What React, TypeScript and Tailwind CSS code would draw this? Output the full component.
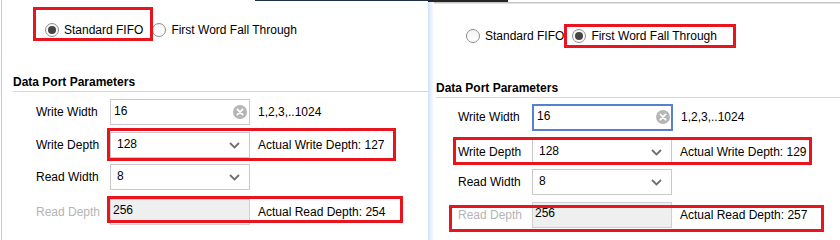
import React from "react";

const FONT = { fontFamily: '"Liberation Sans", Arial, sans-serif' };

function Radio({ checked }: { checked?: boolean }) {
  return (
    <span className="flex h-[14px] w-[14px] shrink-0 items-center justify-center rounded-full border border-[#8e8e8e] bg-gradient-to-b from-[#f4f4f4] to-white">
      {checked && <span className="h-[8px] w-[8px] rounded-full bg-[#454545]" />}
    </span>
  );
}

function RadioItem({ checked, label }: { checked?: boolean; label: string }) {
  return (
    <div className="flex h-[14px] items-center gap-[5px]">
      <Radio checked={checked} />
      <span className="text-[12px] leading-[14px] text-black whitespace-nowrap">{label}</span>
    </div>
  );
}

function ClearIcon() {
  return (
    <svg width="14" height="14" viewBox="0 0 14 14" className="shrink-0">
      <circle cx="7" cy="7" r="7" fill="#b6b6b6" />
      <path d="M4.4 4.4 L9.6 9.6 M9.6 4.4 L4.4 9.6" stroke="#fff" strokeWidth="1.8" strokeLinecap="round" />
    </svg>
  );
}

function Chevron() {
  return (
    <svg width="11" height="7" viewBox="0 0 11 7" className="shrink-0">
      <path d="M1 1 L5.5 5.5 L10 1" stroke="#6f6f6f" strokeWidth="1.8" fill="none" />
    </svg>
  );
}

function TextInput({ value, focused }: { value: string; focused?: boolean }) {
  return (
    <div
      className={
        focused
          ? "flex h-[27px] w-[141px] items-center border-2 border-[#5681cf] bg-white pl-[3px] pr-[1px]"
          : "flex h-[26px] w-[140px] items-center border border-[#c9c9c9] bg-white pl-[3px] pr-[2px]"
      }
    >
      <span className="flex-1 text-[12px] leading-[14px] text-black -mt-[3px]">{value}</span>
      <ClearIcon />
    </div>
  );
}

function Select({ value }: { value: string }) {
  return (
    <div className="flex h-[26px] w-[140px] items-center border border-[#c9c9c9] bg-white pl-[6px] pr-[9px]">
      <span className="flex-1 text-[12px] leading-[14px] text-black -mt-[2px]">{value}</span>
      <Chevron />
    </div>
  );
}

function ReadOnly({ value }: { value: string }) {
  return (
    <div className="flex h-[26px] w-[140px] items-start border border-[#cfcfcf] bg-[#efefef] pl-[2px] pt-[3px]">
      <span className="text-[12px] leading-[14px] text-black">{value}</span>
    </div>
  );
}

function Row({
  label,
  disabled,
  children,
  hint,
}: {
  label: string;
  disabled?: boolean;
  children: React.ReactNode;
  hint?: string;
}) {
  return (
    <div className="flex h-[26px] items-center">
      <span
        className={
          "w-[74px] shrink-0 text-[12px] leading-[14px] whitespace-nowrap " +
          (disabled ? "text-[#b4b4b4]" : "text-black")
        }
      >
        {label}
      </span>
      {children}
      {hint && <span className="ml-[8px] text-[12px] leading-[14px] text-black whitespace-nowrap">{hint}</span>}
    </div>
  );
}

function Heading({ className }: { className: string }) {
  return (
    <div className={className + " border-b border-[#d6d6d6] pb-[2px] text-[12px] leading-[14px]"}>
      <span className="block font-bold text-black">Data Port Parameters</span>
    </div>
  );
}

function LeftPanel() {
  return (
    <div className="flex h-[240px] w-[428px] bg-white">
      <div className="w-px bg-white" />
      <div className="w-px bg-[#b3cff2]" />
      <div className="flex flex-1 flex-col">
        <div className="flex h-px">
          <div className="w-[253px]" />
          <div className="flex-1 bg-[#1d3049]" />
        </div>
        {/* radios */}
        <div className="mt-[22px] flex items-center gap-[9px] pl-[43px]">
          <div className="relative">
            <RadioItem checked label="Standard FIFO" />
            <div className="pointer-events-none absolute left-[-12px] top-[-16px] h-[34px] w-[120px] border-[3px] border-[#e8151f]" />
          </div>
          <RadioItem label="First Word Fall Through" />
        </div>
        <Heading className="mt-[38px] ml-[11px]" />
        {/* rows */}
        <div className="ml-[34px] mt-[7px] flex flex-col">
          <Row label="Write Width" hint="1,2,3,..1024">
            <TextInput value="16" />
          </Row>
          <div className="relative mt-[7px]">
            <Row label="Write Depth" hint="Actual Write Depth: 127">
              <Select value="128" />
            </Row>
            <div className="pointer-events-none absolute left-[71px] top-[-4px] h-[33px] w-[289px] border-[3px] border-[#e8151f]" />
          </div>
          <div className="mt-[6px]">
            <Row label="Read Width">
              <Select value="8" />
            </Row>
          </div>
          <div className="relative mt-[9px]">
            <Row label="Read Depth" disabled hint="Actual Read Depth: 254">
              <ReadOnly value="256" />
            </Row>
            <div className="pointer-events-none absolute left-[71px] top-[-3px] h-[27px] w-[296px] border-[3px] border-[#e8151f]" />
          </div>
        </div>
      </div>
    </div>
  );
}

function RightPanel() {
  return (
    <div className="flex h-[240px] w-[412px] flex-col bg-white">
      <div className="flex h-[2px]">
        <div className="w-[80px] bg-[#262626]" />
        <div className="flex-1" />
      </div>
      <div className="flex flex-1">
        <div className="w-[6px] bg-gradient-to-r from-[#cfe1f8] to-white" />
        <div className="flex flex-1 flex-col">
          <div className="h-px bg-[#c2c2c2]" />
          <div className="h-px bg-[#e4e4e4]" />
          {/* radios */}
          <div className="mt-[25px] flex items-center gap-[8px] pl-[32px]">
            <RadioItem label="Standard FIFO" />
            <div className="relative">
              <RadioItem checked label="First Word Fall Through" />
              <div className="pointer-events-none absolute left-[-8px] top-[-5px] h-[24px] w-[172px] border-[3px] border-[#e8151f]" />
            </div>
          </div>
          <Heading className="mt-[38px] ml-[2px]" />
          {/* rows */}
          <div className="ml-[24px] mt-[6px] flex flex-col">
            <Row label="Write Width" hint="1,2,3,..1024">
              <TextInput value="16" focused />
            </Row>
            <div className="relative mt-[9px]">
              <Row label="Write Depth" hint="Actual Write Depth: 129">
                <Select value="128" />
              </Row>
              <div className="pointer-events-none absolute left-[-5px] top-[-2px] h-[28px] w-[359px] border-[3px] border-[#e8151f]" />
            </div>
            <div className="mt-[4px]">
              <Row label="Read Width">
                <Select value="8" />
              </Row>
            </div>
            <div className="relative mt-[7px]">
              <Row label="Read Depth" disabled hint="Actual Read Depth: 257">
                <ReadOnly value="256" />
              </Row>
              <div className="pointer-events-none absolute left-[-9px] top-[3px] h-[27px] w-[375px] border-[3px] border-[#e8151f]" />
            </div>
          </div>
        </div>
      </div>
    </div>
  );
}

export default function App() {
  return (
    <div className="flex h-[240px] w-[840px] overflow-hidden bg-white" style={FONT}>
      <LeftPanel />
      <RightPanel />
    </div>
  );
}
